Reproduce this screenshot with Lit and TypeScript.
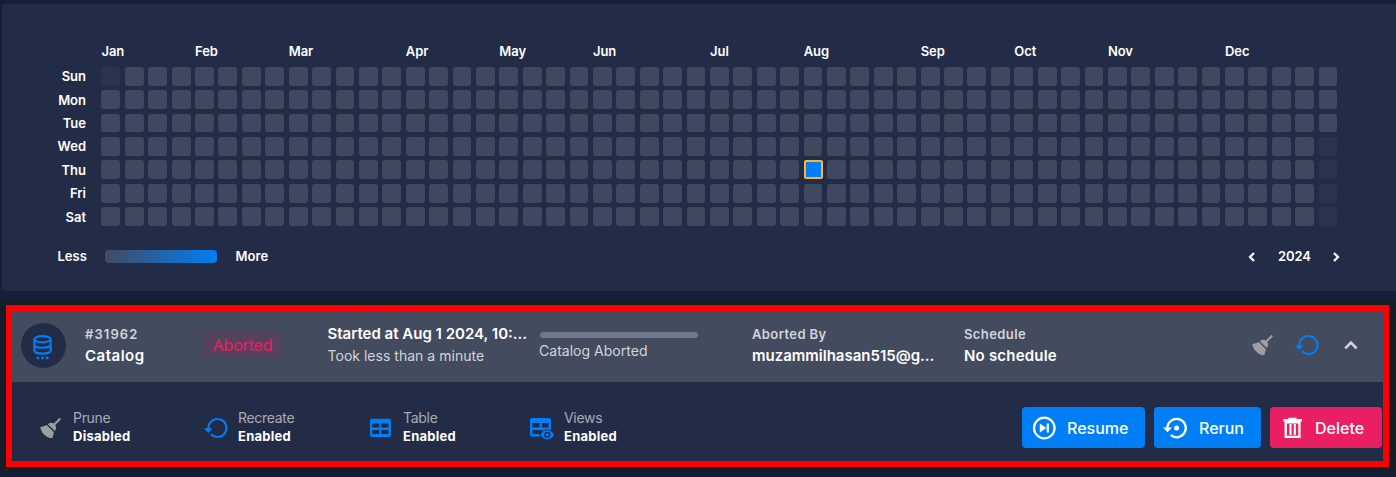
import { LitElement, html, css, svg } from "lit";
import { customElement, property } from "lit/decorators.js";
import { classMap } from "lit/directives/class-map.js";

const DAYS = ["Sun", "Mon", "Tue", "Wed", "Thu", "Fri", "Sat"];
const MONTHS: [string, number][] = [
  ["Jan", 4], ["Feb", 4], ["Mar", 5], ["Apr", 4], ["May", 4], ["Jun", 5],
  ["Jul", 4], ["Aug", 5], ["Sep", 4], ["Oct", 4], ["Nov", 5], ["Dec", 5],
];
const WEEKS = 53;

const ICONS: Record<string, unknown> = {
  broom: svg`<g fill="currentColor"><path d="M20.600.8 22 2.200 16.200 8c1.500 2.100 1 4.200-.4 6.100L8.800 7.200c2-1.500 4.200-1.800 6-.6z"/><path d="M7.800 8.100 14.900 15.200c-.4 2-.8 4.100-1.700 6.100C7 20.900 2 15.600 1.300 10c2.200-.2 4.500-.8 6.500-1.900z"/></g>`,
  recreate: svg`<g fill="none" stroke="currentColor" stroke-width="2.100"><path d="M4.400 12.200V11a9 9 0 1 1 2.600 6.300"/></g><path d="M-.3 11.200h8.800L4.200 16z" fill="currentColor"/>`,
  table: svg`<path fill="currentColor" fill-rule="evenodd" d="M3 1.800h17a2 2 0 0 1 2 2v14.200a2 2 0 0 1-2 2H3a2 2 0 0 1-2-2V3.800a2 2 0 0 1 2-2zM3.300 6.400v4h7v-4zm9 0v4h7.200v-4zM3.300 12.900v4.200h7v-4.200zm9 0v4.200h7.200v-4.200z"/>`,
  views: svg`<path fill="currentColor" fill-rule="evenodd" d="M2 1h17a2 2 0 0 1 2 2v10.200a11 11 0 0 0-2.500-.7V6H12v4.500h6.500V12.500c-2.500-.2-4.700.4-6.500 1.700V13H2.500v4h7.200c-.3.700.1 1.500.6 2.500H2a2 2 0 0 1-2-2V3a2 2 0 0 1 2-2zM2.500 6v4.500h7V6z"/><path fill="currentColor" fill-rule="evenodd" d="M17.300 13.200c3 0 5.400 1.800 6.700 4.600-1.300 2.800-3.700 4.600-6.700 4.600s-5.400-1.800-6.700-4.600c1.300-2.800 3.700-4.600 6.700-4.600zm0 1.500a3.100 3.100 0 1 0 0 6.200 3.100 3.100 0 0 0 0-6.200z"/><circle cx="17.300" cy="17.800" r="1.700" fill="currentColor"/>`,
  database: svg`<g fill="none" stroke="currentColor" stroke-width="2.100"><ellipse cx="9.500" cy="4.200" rx="8.200" ry="3.100"/><path d="M1.300 4.200v11.200c0 1.900 3.600 3.200 8.200 3.200s8.200-1.300 8.200-3.200V4.200M1.300 9.500c0 1.800 3.600 3.200 8.200 3.200s8.200-1.400 8.200-3.200"/></g><path d="M3.700 21.800h2.600v2.400h-2.600zM8.200 21.800h2.600v2.400h-2.600zM12.800 21.800h2.600v2.400h-2.600z" fill="currentColor"/>`,
  resume: svg`<circle cx="12.300" cy="12" r="10.300" fill="none" stroke="currentColor" stroke-width="2.200"/><path d="M7.800 7.500 14.300 12l-6.500 4.500zM14.700 7.500h2.200v9h-2.200z" fill="currentColor"/>`,
  rerun: svg`<path d="M4.400 13V12a9.200 9.200 0 1 1 3.400 7.200" fill="none" stroke="currentColor" stroke-width="2.300"/><path d="M0 11.600h9l-4.500 4.600z" fill="currentColor"/><circle cx="13.600" cy="12" r="2.500" fill="currentColor"/>`,
  trash: svg`<path fill="currentColor" fill-rule="evenodd" d="M5.500.7h8v1.200h5.500v2.600H.3V1.900H5.500zM1.600 4.500h16v16.500H1.600zM3.900 6.400v12.300h11.400V6.400z"/><path d="M7.500 7.100v10.800M11.800 7.100v10.800" stroke="currentColor" stroke-width="2.100"/>`,
  up: svg`<path d="m1.200 8.300 5.700-5.700 5.700 5.700" fill="none" stroke="currentColor" stroke-width="2.600"/>`,
  left: svg`<path d="M6 1 2 5l4 4" fill="none" stroke="currentColor" stroke-width="2.200"/>`,
  right: svg`<path d="m1 1 4 4-4 4" fill="none" stroke="currentColor" stroke-width="2.200"/>`,
};

const icon = (name: string, w: number, h: number) =>
  html`<svg width=${w} height=${h} viewBox="0 0 ${w} ${h}" aria-hidden="true">${ICONS[name]}</svg>`;

const base = css`
  :host { display: block; box-sizing: border-box; font-family: Inter, "Noto Sans", sans-serif; color: #fff; }
  * { box-sizing: border-box; }
  svg { display: block; flex: none; overflow: visible; }
`;

@customElement("activity-calendar")
class ActivityCalendar extends LitElement {
  static styles = [base, css`
    :host { height: 287px; background: #232c46; border-radius: 4px 0 0 4px; padding: 37px 0 0 0; font-size: 13px; font-weight: 600; }
    .months { display: grid; grid-template-columns: repeat(53, 18.84375px); column-gap: 4.5625px; margin-left: 99.450px; height: 25.800px; line-height: 20px; letter-spacing: -.05px; }
    .m4 { grid-column: span 4; }
    .m5 { grid-column: span 5; }
    .body { display: flex; }
    .days { width: 84px; margin-right: 15.450px; padding-top: .4px; text-align: right; display: grid; grid-template-rows: repeat(7, 23.400px); line-height: 19px; height: 159px; }
    .weeks { display: grid; grid-auto-flow: column; grid-template-rows: repeat(7, 18.750px); grid-auto-columns: 18.84375px; gap: 4.650px 4.5625px; }
    .cell { background: #40485f; border-radius: 3px; }
    .faint { background: #2b344d; }
    .active { background: #007ef5; border: 2px solid #fdb52b; border-radius: 2px; margin-right: -.5px; }
    .legend { display: flex; align-items: center; height: 20px; margin: 20.200px 0 0 55.500px; }
    .bar { width: 112px; height: 13px; border-radius: 4px; margin: 1px 18.500px 0 0; background: linear-gradient(90deg, #424b61, #007ef5); }
    .less { width: 47.500px; }
    .more { letter-spacing: .1px; }
    .pager { display: flex; align-items: center; margin-left: auto; padding-right: 56px; }
    .pager svg { margin-top: 1px; }
    .year { width: 78px; padding-left: 1px; text-align: center; letter-spacing: -.1px; }
  `];

  render() {
    const cells = Array.from({ length: WEEKS * 7 }, (_, i) => {
      const week = Math.floor(i / 7), day = i % 7;
      return html`<div class=${classMap({
        cell: true,
        faint: i === 0 || (week === WEEKS - 1 && day > 2),
        active: week === 30 && day === 4,
      })}></div>`;
    });
    return html`
      <div class="months">${MONTHS.map(([m, s]) => html`<span class="m${s}">${m}</span>`)}</div>
      <div class="body">
        <div class="days">${DAYS.map((d) => html`<span>${d}</span>`)}</div>
        <div class="weeks">${cells}</div>
      </div>
      <div class="legend">
        <span class="less">Less</span><span class="bar"></span><span class="more">More</span>
        <div class="pager">${icon("left", 7, 10)}<span class="year">2024</span>${icon("right", 7, 10)}</div>
      </div>`;
  }
}

@customElement("job-setting")
class JobSetting extends LitElement {
  @property() icon = "";
  @property() label = "";
  @property() value = "";
  static styles = [base, css`
    :host { display: flex; align-items: center; font-size: 13px; line-height: 18px; }
    .icon { width: 34px; padding-top: 2px; color: #007ef5; }
    .off { color: #9e9e9e; }
    .label { color: #a7abb5; font-size: 14px; letter-spacing: -.3px; }
    .value { font-weight: 700; letter-spacing: .25px; }
  `];
  render() {
    return html`
      <div class=${classMap({ icon: true, off: this.value === "Disabled" })}>${icon(this.icon, 22, 22)}</div>
      <div><div class="label">${this.label}</div><div class="value">${this.value}</div></div>`;
  }
}

@customElement("job-panel")
class JobPanel extends LitElement {
  static styles = [base, css`
    :host { background: #161c28; height: 172px; padding: 5px 7px 6px 6px; }
    .frame { border: 6px solid #ff0000; height: 162px; background: #232c46; }
    .head { display: flex; height: 71px; background: #434b5f; padding-left: 9px; }
    .avatar { width: 45px; height: 45px; border-radius: 50%; background: #232c46; color: #007ef5; margin: 12px 19px 0 0; padding: 12px 0 0 12.200px; }
    .col { display: flex; flex-direction: column; padding-top: 12px; white-space: nowrap; }
    .c1 { width: 116.500px; }
    .c3 { width: 211.500px; }
    .c4 { width: 213px; padding-top: 21px; }
    .c5 { width: 212px; }
    .small { font-size: 14px; line-height: 22px; font-weight: 400; color: #d2d5da; letter-spacing: .02px; }
    .label { font-size: 13px; font-weight: 600; letter-spacing: .4px; }
    .id { letter-spacing: 1.1px; }
    .took { padding-top: 1px; }
    .big { font-size: 15px; line-height: 21px; font-weight: 600; }
    .wide { letter-spacing: .5px; }
    .roomy { letter-spacing: .2px; }
    .badge { width: 82px; height: 26px; margin: 21px 44px 0 0; border-radius: 4px; background: #55435d; color: #e91e63; font-size: 16px; line-height: 26px; letter-spacing: -.2px; text-align: center; }
    .progress { width: 158px; height: 6px; border-radius: 3px; background: #71788a; margin: 0 0 2px 1px; }
    .actions { display: flex; align-items: center; margin-left: auto; padding: 0 25px 4px 0; }
    .gray { color: #9e9e9e; padding-top: 1px; }
    .blue { color: #007ef5; margin: 0 26px 0 22px; }
    .up { color: #d2d5da; padding-top: 1px; }
    .foot { display: flex; align-items: center; height: 78px; padding: 13px 1px 0 27px; }
    .s1 { width: 165px; }
    .s2 { width: 161px; }
    .buttons { display: flex; gap: 9px; margin-left: auto; }
    .btn { display: flex; align-items: center; height: 41px; border-radius: 4px; background: #007ef5; font-size: 16px; font-weight: 500; }
    .resume { width: 123px; padding-left: 10px; gap: 11px; }
    .rerun { width: 107px; padding-left: 9px; gap: 11px; }
    .delete { width: 112px; padding-left: 13px; gap: 12px; background: #e91e63; }
    .foot job-setting { margin-bottom: 2px; }
  `];
  render() {
    return html`<div class="frame">
      <div class="head">
        <div class="avatar">${icon("database", 20, 24)}</div>
        <div class="col c1"><span class="small label id">#31962</span><span class="big wide">Catalog</span></div>
        <div class="badge">Aborted</div>
        <div class="col c3"><span class="big">Started at Aug 1 2024, 10:…</span><span class="small took">Took less than a minute</span></div>
        <div class="col c4"><span class="progress"></span><span class="small">Catalog Aborted</span></div>
        <div class="col c5"><span class="small label">Aborted By</span><span class="big">muzammilhasan515@g…</span></div>
        <div class="col c6"><span class="small label">Schedule</span><span class="big roomy">No schedule</span></div>
        <div class="actions">
          <span class="gray">${icon("broom", 22, 22)}</span>
          <span class="blue">${icon("recreate", 23, 22)}</span>
          <span class="up">${icon("up", 14, 10)}</span>
        </div>
      </div>
      <div class="foot">
        <job-setting class="s1" icon="broom" label="Prune" value="Disabled"></job-setting>
        <job-setting class="s1" icon="recreate" label="Recreate" value="Enabled"></job-setting>
        <job-setting class="s2" icon="table" label="Table" value="Enabled"></job-setting>
        <job-setting class="s1" icon="views" label="Views" value="Enabled"></job-setting>
        <div class="buttons">
          <div class="btn resume">${icon("resume", 24, 24)}<span>Resume</span></div>
          <div class="btn rerun">${icon("rerun", 25, 24)}<span>Rerun</span></div>
          <div class="btn delete">${icon("trash", 20, 22)}<span>Delete</span></div>
        </div>
      </div>
    </div>`;
  }
}

@customElement("app-root")
class AppRoot extends LitElement {
  static styles = [base, css`
    :host { height: 477px; background: #151f3a; padding-top: 4px; overflow: hidden; }
    activity-calendar { margin: 0 0 9px 2px; }
  `];
  render() {
    return html`<activity-calendar></activity-calendar><job-panel></job-panel>`;
  }
}
